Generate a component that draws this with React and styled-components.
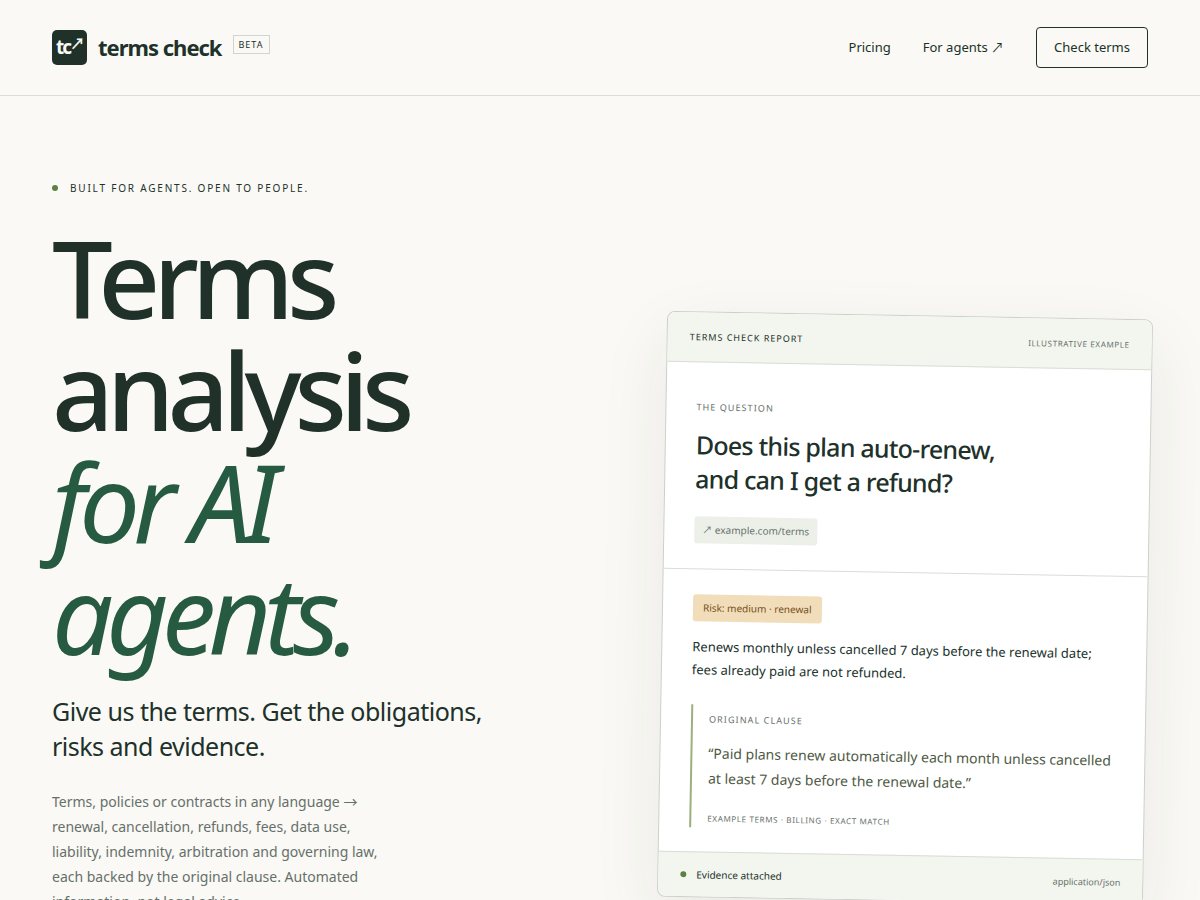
import React from "react";
import styled, { createGlobalStyle } from "styled-components";

const App = () => {
    return (
        <>
            <GlobalStyle />
            <Header>
                <Brand href="#home">
                    <LogoMark>
                        tc<LogoArrow>↗</LogoArrow>
                    </LogoMark>
                    <BrandName>terms check</BrandName>
                    <BetaTag>BETA</BetaTag>
                </Brand>
                <Nav>
                    <NavLink href="#pricing">Pricing</NavLink>
                    <NavLink href="#agents">For agents ↗</NavLink>
                    <NavButton>Check terms</NavButton>
                </Nav>
            </Header>
            <Hero>
                <Intro>
                    <Eyebrow>
                        <Dot />
                        BUILT FOR AGENTS. OPEN TO PEOPLE.
                    </Eyebrow>
                    <Headline>
                        Terms analysis
                        <em>for AI agents.</em>
                    </Headline>
                    <Lead>Give us the terms. Get the obligations, risks and evidence.</Lead>
                    <Description>
                        Terms, policies or contracts in any language → renewal, cancellation,
                        refunds, fees, data use, liability, indemnity, arbitration and governing
                        law, each backed by the original clause. Automated information, not
                        legal advice.
                    </Description>
                </Intro>
                <ReportColumn>
                    <Report>
                        <ReportHeader>
                            <ReportName>TERMS CHECK REPORT</ReportName>
                            <SmallCaps>ILLUSTRATIVE EXAMPLE</SmallCaps>
                        </ReportHeader>
                        <QuestionSection>
                            <Label>THE QUESTION</Label>
                            <Question>
                                Does this plan auto-renew,
                                <br />
                                and can I get a refund?
                            </Question>
                            <Chip>↗ example.com/terms</Chip>
                        </QuestionSection>
                        <AnswerSection>
                            <Chip $risk>Risk: medium · renewal</Chip>
                            <Answer>
                                Renews monthly unless cancelled 7 days before the renewal date;
                                fees already paid are not refunded.
                            </Answer>
                            <Clause>
                                <Label>ORIGINAL CLAUSE</Label>
                                <Quote>
                                    “Paid plans renew automatically each month unless cancelled at
                                    least 7 days before the renewal date.”
                                </Quote>
                                <SmallCaps>EXAMPLE TERMS · BILLING · EXACT MATCH</SmallCaps>
                            </Clause>
                        </AnswerSection>
                        <ReportFooter>
                            <Evidence>
                                <Dot />
                                Evidence attached
                            </Evidence>
                            <Format>application/json</Format>
                        </ReportFooter>
                    </Report>
                </ReportColumn>
            </Hero>
        </>
    );
};

export default App;

// Styled components
const GlobalStyle = createGlobalStyle`
    * {
        box-sizing: border-box;
    }

    body {
        margin: 0;
        background: #faf9f5;
        color: #20312a;
        font-family: "Noto Sans", "Noto Sans CJK JP", sans-serif;
        font-size: 14px;
        overflow-x: hidden;
    }

    h1, h2, p, blockquote {
        margin: 0;
    }
`;

const Header = styled.header`
    display: flex;
    align-items: center;
    justify-content: space-between;
    height: 96px;
    padding: 0 52px;
    border-bottom: 1px solid #d9ddd6;
`;

const Brand = styled.a`
    display: flex;
    align-items: center;
    gap: 11px;
    color: inherit;
    text-decoration: none;
`;

const LogoMark = styled.span`
    display: flex;
    align-items: flex-start;
    padding-left: 4px;
    width: 35px;
    height: 35px;
    border-radius: 5px;
    background: #20312a;
    color: #faf9f5;
    font-size: 19px;
    font-weight: 700;
    line-height: 34px;
    letter-spacing: -2px;
`;

const LogoArrow = styled.span`
    font-size: 15px;
    line-height: 27px;
`;

const BrandName = styled.span`
    font-size: 22px;
    font-weight: 700;
    line-height: 27px;
    letter-spacing: -1px;
`;

const BetaTag = styled.span`
    align-self: flex-start;
    margin-top: 5px;
    padding: 0 5px;
    border: 1px solid #d0d6ce;
    font-size: 9px;
    line-height: 17px;
    letter-spacing: 1px;
`;

const Nav = styled.nav`
    display: flex;
    align-items: center;
    gap: 32px;
    line-height: 19px;
`;

const NavLink = styled.a`
    color: inherit;
    font-size: 13px;
    text-decoration: none;
`;

const NavButton = styled.button`
    height: 41px;
    padding: 0 17px;
    border: 1px solid #20312a;
    border-radius: 4px;
    background: transparent;
    color: inherit;
    font-family: inherit;
    font-size: 13px;
    line-height: 19px;
    cursor: pointer;
`;

const Hero = styled.main`
    display: grid;
    grid-template-columns: 1.09fr 1fr;
    gap: 80px;
    padding: 84px 52px;
`;

const Intro = styled.section`
    min-width: 0;
`;

const Dot = styled.span`
    width: 6px;
    height: 6px;
    border-radius: 50%;
    background: #5f8044;
`;

const Eyebrow = styled.p`
    display: flex;
    align-items: center;
    gap: 12px;
    font-size: 10px;
    line-height: 16px;
    letter-spacing: 0.18em;
`;

const Headline = styled.h1`
    margin-top: 26px;
    font-size: 108px;
    font-weight: 500;
    line-height: 112px;
    letter-spacing: -7px;

    em {
        display: block;
        color: #265a41;
        font-weight: 400;
    }
`;

const Lead = styled.p`
    margin-top: 24px;
    max-width: 460px;
    font-size: 25px;
    line-height: 35px;
    letter-spacing: -0.02em;
`;

const Description = styled.p`
    margin-top: 25px;
    max-width: 340px;
    color: #66706a;
    font-size: 14px;
    line-height: 25px;
`;

const ReportColumn = styled.section`
    min-width: 0;
    padding-top: 135px;
`;

const Report = styled.article`
    overflow: hidden;
    border: 1px solid #cbd1c9;
    border-radius: 8px;
    background: #ffffff;
    box-shadow: 0 24px 70px rgba(32, 49, 42, 0.08);
    transform: rotate(1deg);
`;

const ReportHeader = styled.header`
    display: flex;
    align-items: center;
    justify-content: space-between;
    height: 50px;
    padding: 0 22px;
    border-bottom: 1px solid #d9ddd6;
    background: #f3f6ef;
`;

const ReportName = styled.span`
    font-size: 9px;
    letter-spacing: 1px;
`;

const SmallCaps = styled.span`
    display: block;
    color: #66706a;
    font-size: 8px;
    line-height: 12px;
    letter-spacing: 0.08em;
`;

const QuestionSection = styled.section`
    padding: 37px 30px 25px;
    border-bottom: 1px solid #d9ddd6;
`;

const Label = styled.p`
    color: #66706a;
    font-size: 9px;
    line-height: 16px;
    letter-spacing: 0.12em;
`;

const Question = styled.h2`
    margin: 12px 0 21px;
    font-size: 25px;
    font-weight: 500;
    line-height: 34px;
    letter-spacing: -0.03em;
`;

const Chip = styled.span`
    display: inline-block;
    vertical-align: top;
    padding: 0 ${(props) => (props.$risk ? 10 : 8)}px;
    border-radius: 3px;
    background: ${(props) => (props.$risk ? "#f1ddb9" : "#ecf0e9")};
    color: ${(props) => (props.$risk ? "#76501a" : "#66706a")};
    font-size: 10px;
    line-height: 27px;
`;

const AnswerSection = styled.section`
    padding: 25px 30px 24px;
`;

const Answer = styled.p`
    margin-top: 14px;
    font-size: 13px;
    line-height: 23px;
`;

const Clause = styled.blockquote`
    margin-top: 23px;
    padding: 7px 0 3px 16px;
    border-left: 2px solid #9caf7c;
`;

const Quote = styled.p`
    margin: 13px 0 22px;
    color: #4f5a45;
    font-size: 14px;
    line-height: 25px;
`;

const ReportFooter = styled.footer`
    display: flex;
    align-items: center;
    justify-content: space-between;
    height: 45px;
    padding: 0 22px;
    border-top: 1px solid #d9ddd6;
    background: #f3f6ef;
`;

const Evidence = styled.span`
    display: flex;
    align-items: center;
    gap: 10px;
    font-size: 10px;
`;

const Format = styled.span`
    color: #66706a;
    font-size: 9px;
    line-height: 13px;
`;
